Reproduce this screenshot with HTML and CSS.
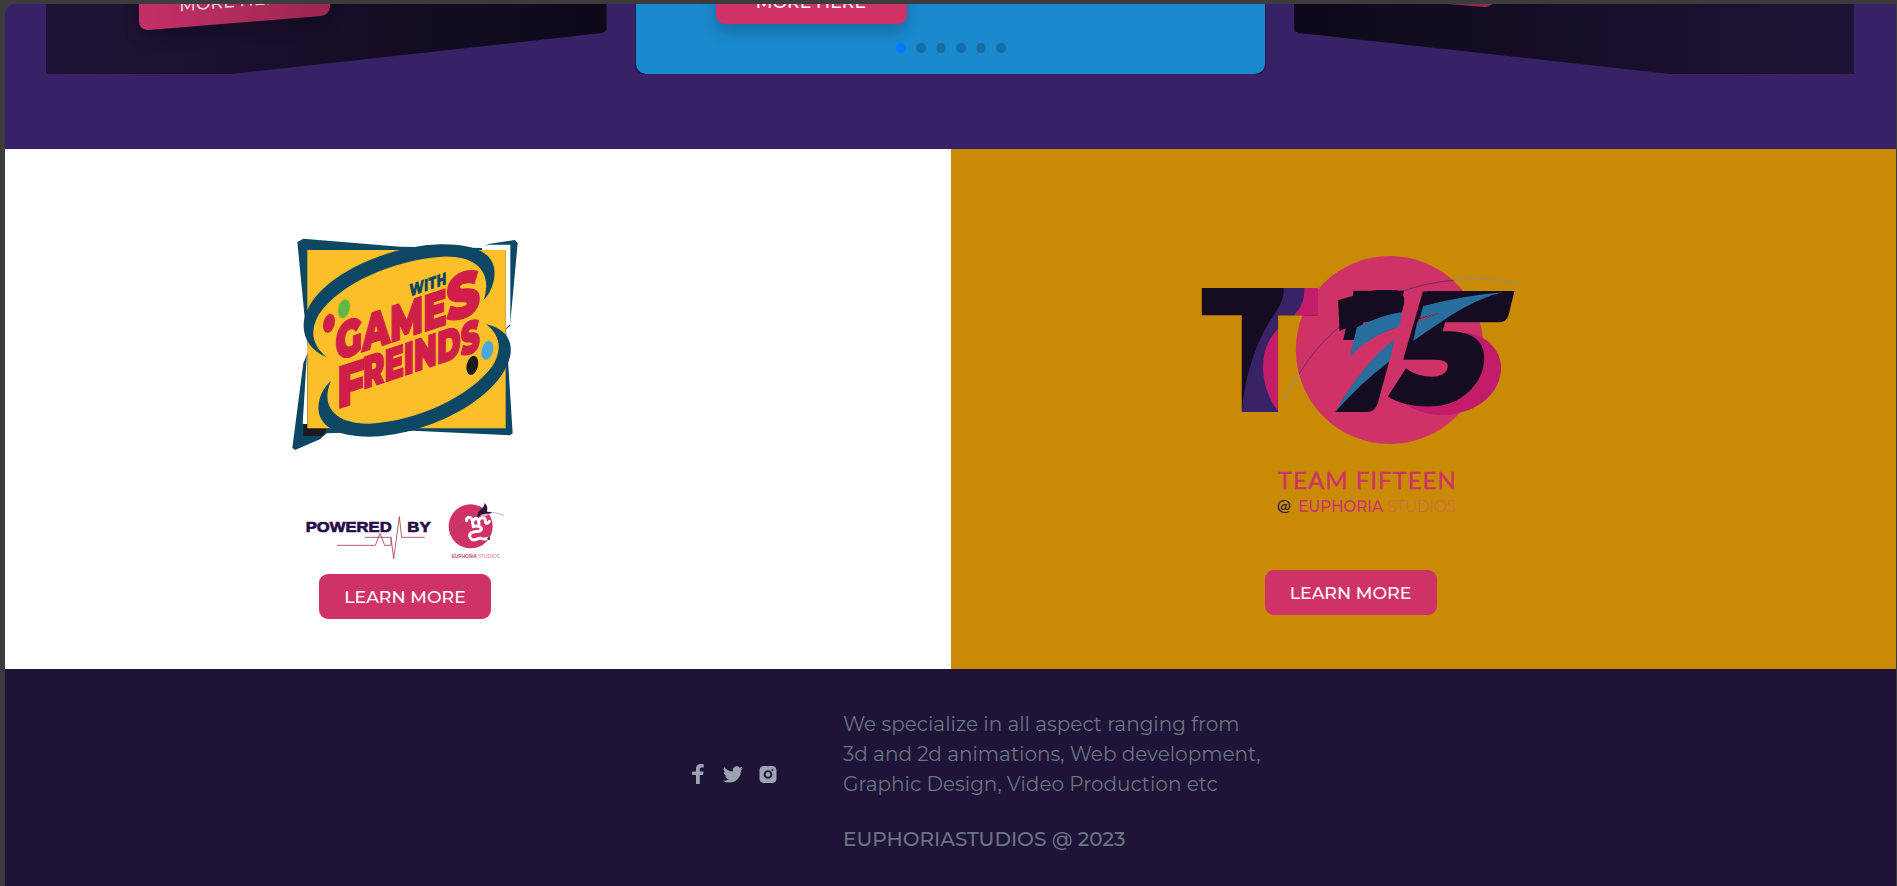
FILE: index.html
```html
<!DOCTYPE html>
<html lang="en">
<head>
<meta charset="utf-8">
<title>Euphoria Studios</title>
<link rel="stylesheet" href="styles.css">
</head>
<body>
<div class="page">
  <section class="hero">
    <div class="slides">
      <article class="slide slide-left"><a class="more more-left">MORE HERE</a></article>
      <article class="slide slide-main">
        <a class="more more-main">MORE HERE</a>
        <div class="dots"><i class="dot on"></i><i class="dot"></i><i class="dot"></i><i class="dot"></i><i class="dot"></i><i class="dot"></i></div>
      </article>
      <article class="slide slide-right"><a class="more more-right"></a></article>
    </div>
  </section>

  <section class="brands">
    <div class="brand brand-games">
      <svg class="games-logo" viewBox="0 0 750 720">
        <path fill="#0d4763" d="M52 66L70 56L360 80L610 84L625 72L705 60L713 70L690 318L678 328L698 640L690 646L400 632L140 640L120 658L45 690L37 683L70 430L84 395Z"/>
        <path fill="#fff" d="M606 84L625 74H691V312L677 326V90H606Z"/>
        <path fill="#fff" d="M81 400L68 610L81 622Z"/>
        <path fill="#1b1a1c" d="M70 612H142L136 640L122 648H70Z"/>
        <path fill="#fbbf29" d="M82 90H677V625H82Z"/>
        <path fill="#0d4763" d="M140 411C78 388 54 325 83 268C134 160 325 78 480 73C596 71 651 105 643 171C639 201 628 222 611 240C639 158 590 106 488 110C342 119 178 190 116 284C88 333 97 377 140 411Z"/>
        <path fill="#0d4763" d="M618 313C685 326 708 376 682 434C633 548 435 646 270 650C158 651 109 611 116 553C119 525 132 502 153 482C120 557 164 613 267 611C410 604 570 530 638 437C669 389 659 342 618 313Z"/>
        <ellipse cx="147" cy="310" rx="17" ry="29" fill="#cf1f49" transform="rotate(14 147 310)"/>
        <ellipse cx="192" cy="266" rx="17" ry="29" fill="#61b746" transform="rotate(14 192 266)"/>
        <ellipse cx="577" cy="436" rx="17" ry="29" fill="#1b1a1c" transform="rotate(14 577 436)"/>
        <ellipse cx="622" cy="391" rx="17" ry="29" fill="#4aa8df" transform="rotate(14 622 391)"/>
        <g class="games-word">
          <text transform="translate(388 231) skewY(-19)" class="with" font-size="54" textLength="111" lengthAdjust="spacingAndGlyphs">WITH</text>
          <text transform="translate(166 422) skewY(-18)" font-size="154" textLength="334" lengthAdjust="spacingAndGlyphs">GAME</text>
          <text transform="translate(499 307) skewY(-16)" font-size="190" textLength="101" lengthAdjust="spacingAndGlyphs">S</text>
          <text transform="translate(172 567) skewY(-18)" font-size="178" textLength="83" lengthAdjust="spacingAndGlyphs">F</text>
          <text transform="translate(249 508) skewY(-18.5)" font-size="136" textLength="350" lengthAdjust="spacingAndGlyphs">REINDS</text>
        </g>
      </svg>
      <svg class="powered" viewBox="0 0 690 252">
        <g class="powered-word">
          <text x="47" y="126" font-size="44" textLength="258" lengthAdjust="spacingAndGlyphs">POWERED</text>
          <text x="352" y="126" font-size="44" textLength="70" lengthAdjust="spacingAndGlyphs">BY</text>
        </g>
        <path fill="none" stroke="#a73a62" stroke-width="2.500" d="M141 166H256L270 130L284 166H303V142H224M303 142L311 206L328 80L335 142H404"/>
        <circle cx="542" cy="109" r="66" fill="#cf3267"/>
        <path fill="none" stroke="#7a7193" stroke-width="1.500" d="M475 136C505 95 540 74 575 68C600 64 620 68 641 76"/>
        <path fill="#29123f" d="M562 80C563 55 582 60 584 39C592 46 594 56 590 65L606 67C594 78 577 74 562 80Z"/>
        <path fill="#f3a6bd" d="M570 77C582 69 591 73 600 70C591 82 578 80 570 77Z"/>
        <path fill="none" stroke="#fff" stroke-width="9" stroke-linejoin="round" stroke-linecap="round" d="M530 92C528 82 540 78 546 88L550 110M550 92C556 80 566 84 567 102M567 90C574 80 586 82 586 92C586 102 594 102 598 94M550 110C562 106 576 110 574 119C570 128 556 122 545 128C536 133 538 143 545 148C556 154 562 143 572 145C580 147 586 148 592 145"/>
        <circle cx="596" cy="146" r="4" fill="#35203d"/>
        <text x="485" y="203" class="tiny-name" font-size="14" textLength="76" lengthAdjust="spacingAndGlyphs">EUPHORIA</text>
        <text x="565" y="203" class="tiny-sub" font-size="14" textLength="64" lengthAdjust="spacingAndGlyphs">STUDIOS</text>
      </svg>
      <a class="learn">LEARN MORE</a>
    </div>

    <div class="brand brand-team">
      <svg class="team-logo" viewBox="-58.5 0 1080 990">
        <defs>
          <clipPath id="tClip"><text class="heavy tee" transform="translate(19 516)" font-size="511" textLength="379" lengthAdjust="spacingAndGlyphs">T</text></clipPath>
        </defs>
        <circle cx="598" cy="330" r="282" fill="#cf3267"/>
        <path fill="#c21c6b" d="M765 288C850 255 932 310 932 384C930 450 880 500 812 517C740 540 660 515 604 463L740 490Q860 480 870 390Q865 320 765 288Z"/>
        <path fill="none" stroke="#69306d" stroke-width="3" d="M326 402C360 345 400 300 450 258M632 155Q710 127 790 121"/>
        <path fill="none" stroke="#8f8e8c" stroke-width="3" d="M281 481Q298 440 326 402M790 121Q890 106 986 130"/>
        <text class="heavy tee" transform="translate(19 516)" font-size="511" textLength="379" lengthAdjust="spacingAndGlyphs">T</text>
        <g clip-path="url(#tClip)">
          <path fill="#3a2266" d="M278 140C288 190 240 230 215 285C180 355 160 440 152 530H400V140Z"/>
          <path fill="#c21c6b" d="M341 140C344 180 332 205 303 234H400V140ZM268 262C195 325 207 450 268 520Z"/>
        </g>
        <text class="heavy" transform="translate(407 516) skewX(-12)" font-size="520" textLength="162" lengthAdjust="spacingAndGlyphs">7</text>
        <path fill="#150c22" d="M443 180L555 150H610Q645 152 641 190L633 222Q540 232 447 273Z"/>
        <path fill="#cf3267" d="M476 352Q540 282 628 260L614 298Q520 375 432 516L440 470Z"/>
        <path fill="#286f9f" d="M499 262Q570 225 635 216L626 261Q540 285 478 350Z"/>
        <path fill="#150c22" d="M597 360L562 490Q554 516 528 516H434Q520 410 597 360Z"/>
        <path fill="#286f9f" d="M612 299L597 364Q510 430 434 516Q520 365 612 299Z"/>
        <text class="heavy" transform="translate(585 491) skewX(-12)" font-size="482" textLength="278" lengthAdjust="spacingAndGlyphs">5</text>
        <path fill="#150c22" d="M712 153H972L954 226Q948 247 926 247H690Z"/>
        <path fill="#286f9f" d="M698 198Q825 166 938 157C850 175 750 245 668 304L680 246L745 219L688 235Z"/>
        <path fill="#cf3267" d="M682 246L686 237L748 217Z"/>
        <g class="team-name">
          <text x="262" y="747" font-size="72" textLength="534" lengthAdjust="spacing">TEAM FIFTEEN</text>
          <text x="259" y="813" class="at" font-size="43" textLength="42" lengthAdjust="spacingAndGlyphs">@</text>
          <text x="323" y="816" class="by" font-size="49" textLength="255" lengthAdjust="spacingAndGlyphs">EUPHORIA</text>
          <text x="591" y="816" class="studios" font-size="49" textLength="205" lengthAdjust="spacingAndGlyphs">STUDIOS</text>
        </g>
      </svg>
      <a class="learn">LEARN MORE</a>
    </div>
  </section>

  <footer class="footer">
    <div class="social">
      <svg class="fb" viewBox="0 0 12 20"><path d="M4 20V11H.3V7.500H4V4.800C4 1.700 5.800 0 8.700 0H11.700V3.400H9.700C8.200 3.400 7.800 4.100 7.800 5.300V7.500H11.600L11 11H7.800V20Z"/></svg>
      <svg class="tw" viewBox="0 0 24 20"><path d="M23.950 2.570a10 10 0 0 1-2.820.770 4.960 4.960 0 0 0 2.160-2.720c-.95.550-2 .95-3.120 1.180a4.920 4.920 0 0 0-8.380 4.480C7.690 6.100 4.070 4.130 1.640 1.160a4.920 4.920 0 0 0 1.520 6.570 4.900 4.900 0 0 1-2.230-.61v.06c0 2.380 1.700 4.370 3.950 4.820a5 5 0 0 1-2.210.08 4.940 4.940 0 0 0 4.600 3.420A9.870 9.870 0 0 1 0 17.540a14 14 0 0 0 7.550 2.210c9.050 0 14-7.500 14-13.980 0-.21 0-.42-.02-.63a9.940 9.940 0 0 0 2.420-2.570z"/></svg>
      <svg class="ig" viewBox="0 0 18 18"><rect width="18" height="18" rx="4.500"/><circle cx="9" cy="9" r="3.600" fill="none" stroke="#1e1437" stroke-width="2"/><circle cx="13.700" cy="4.300" r="1.100" fill="#1e1437"/></svg>
    </div>
    <div class="about">
      <p class="about-text">We specialize in all aspect ranging from<br>3d and 2d animations, Web development,<br>Graphic Design, Video Production etc</p>
      <p class="copyright">EUPHORIASTUDIOS @ 2023</p>
    </div>
  </footer>
</div>
</body>
</html>
```
FILE: styles.css
```css
* { box-sizing: border-box; }
body {
  margin: 0;
  background: #3c3c3c;
  font-family: Montserrat, Inter, "Open Sans", sans-serif;
  overflow: hidden;
}
.page { height: 886px; padding: 4px 1px 0 5px; display: flex; flex-direction: column; }

.hero { height: 145px; background: #372167; border-top-left-radius: 10px; overflow: hidden; }
.slides { display: flex; height: 70px; padding-left: 41px; overflow: hidden; }
.slide { height: 70px; flex: none; }
.slide-left {
  width: 560.5px;
  padding-left: 93px;
  background: linear-gradient(90deg, #1e1437, #0d0918);
  clip-path: path("M0 0H560.5V24Q560.500 28 556 29L185 70H0Z");
}
.slide-main {
  width: 629.500px;
  margin: 0 29px 0 29px;
  padding-left: 80px;
  background: #1a89ce;
  border-radius: 0 0 10px 10px;
  box-shadow: 0 1px 2px #0c0820;
}
.slide-right {
  width: 560px;
  padding-left: 0;
  background: linear-gradient(270deg, #1e1437, #0d0918);
  clip-path: path("M0 0V24Q0 28 5 29L376 70H560V0Z");
}
.more {
  display: flex;
  align-items: center;
  justify-content: center;
  width: 191px;
  height: 45px;
  margin-top: -25px;
  border-radius: 9px;
  background: #cf3267;
  color: #fff;
  font-size: 17.400px;
  font-weight: 500;
  box-shadow: 0 8px 16px rgba(0, 0, 0, .2);
}
.more-left { margin-top: -26.500px; background: linear-gradient(90deg, #c43065, #9c2650); color: #dccfdb; transform: skewY(-4.600deg); }
.more-right { margin: -49px 0 0 9px; background: #962850; transform: skewY(4.600deg); box-shadow: none; }
.dots { display: flex; gap: 10px; padding: 19px 0 0 180px; }
.dot { width: 10px; height: 10px; border-radius: 50%; background: #166ea6; }
.dot.on { background: #007aff; }

.brands { height: 520px; display: grid; grid-template-columns: 1fr 1fr; }
.brand { display: flex; flex-direction: column; align-items: center; padding-right: 145.500px; }
.brand-games { background: #fff; padding-top: 71px; }
.brand-team { background: #c98a04; padding-top: 91px; }
.games-logo { width: 250px; height: 240px; margin-bottom: 30px; }
.powered { width: 230px; height: 84px; }
.team-logo { width: 360px; height: 330px; }
.games-word { font-family: Montserrat, Inter, sans-serif; font-weight: 900; fill: #cf1f49; stroke: #cf1f49; stroke-width: 4; }
.games-word .with { fill: #0d4763; stroke: none; }
.powered-word { font-family: "Liberation Sans", sans-serif; font-weight: 700; fill: #270d48; stroke: #270d48; stroke-width: 2; }
.tiny-name, .tiny-sub { fill: #b53565; font-weight: 600; }
.tiny-sub { font-weight: 400; }
.heavy { font-family: Montserrat, Inter, sans-serif; font-weight: 900; fill: #150c22; }
.heavy.tee { font-family: Inter, sans-serif; }
.team-name { font-family: Lato, sans-serif; font-weight: 400; fill: #cf3267; stroke: #cf3267; stroke-width: 1; }
.team-name .at { fill: #241b3d; stroke: #241b3d; stroke-width: .5; }
.team-name .by { font-family: Montserrat, sans-serif; font-weight: 500; stroke: none; }
.team-name .studios { font-family: Montserrat, sans-serif; font-weight: 300; fill: #cd6750; stroke: none; }
.learn {
  display: flex;
  align-items: center;
  justify-content: center;
  width: 172px;
  height: 45px;
  border-radius: 9px;
  background: #cf3267;
  color: #fff;
  font-size: 17.400px;
  font-weight: 500;
}

.footer { flex: 1; display: flex; background: #1e1437; padding: 40px 0 0 687px; color: #6b7280; }
.social { width: 151px; display: flex; gap: 19px; padding-top: 55px; fill: #9ca3af; }
.fb { width: 12px; height: 20px; }
.tw { width: 20px; height: 17px; margin-top: 2px; }
.ig { width: 18px; height: 17px; margin: 2px 0 0 -3px; }
.about p { margin: 0; font-size: 20px; line-height: 30px; white-space: nowrap; }
.about-text { font-weight: 400; }
.about .copyright { margin-top: 25px; font-weight: 500; }
```
